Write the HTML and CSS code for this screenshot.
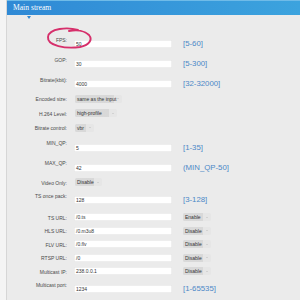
FILE: index.html
```html
<!DOCTYPE html>
<html>
<head>
<meta charset="utf-8">
<link rel="stylesheet" href="styles.css">
</head>
<body>
<div class="page">
  <div class="rail"></div>
  <div class="panel">
    <div class="header"><span class="title">Main stream</span></div>
    <div class="form">
      <div class="row tall"><span class="lbl">FPS:</span><span class="input">50</span><span class="hint">[5-60]</span></div>
      <div class="row tall"><span class="lbl">GOP:</span><span class="input">30</span><span class="hint">[5-300]</span></div>
      <div class="row tall"><span class="lbl">Bitrate(kbit):</span><span class="input">4000</span><span class="hint">[32-32000]</span></div>
      <div class="row sel"><span class="lbl">Encoded size:</span><span class="select w-size">same as the input</span></div>
      <div class="row sel"><span class="lbl">H.264 Level:</span><span class="select w-level">high-profile</span></div>
      <div class="row sel"><span class="lbl">Bitrate control:</span><span class="select w-vbr">vbr</span></div>
      <div class="row tall"><span class="lbl">MIN_QP:</span><span class="input">5</span><span class="hint">[1-35]</span></div>
      <div class="row tall"><span class="lbl">MAX_QP:</span><span class="input">42</span><span class="hint">(MIN_QP-50]</span></div>
      <div class="row sel"><span class="lbl">Video Only:</span><span class="select w-dis">Disable</span></div>
      <div class="row mid"><span class="lbl">TS once pack:</span><span class="input">128</span><span class="hint">[3-128]</span></div>
      <div class="row url first"><span class="lbl">TS URL:</span><span class="input">/0.ts</span><span class="select w-url">Enable</span></div>
      <div class="row url"><span class="lbl">HLS URL:</span><span class="input">/0.m3u8</span><span class="select w-url">Disable</span></div>
      <div class="row url"><span class="lbl">FLV URL:</span><span class="input">/0.flv</span><span class="select w-url">Disable</span></div>
      <div class="row url"><span class="lbl">RTSP URL:</span><span class="input">/0</span><span class="select w-url">Disable</span></div>
      <div class="row url"><span class="lbl">Multicast IP:</span><span class="input">238.0.0.1</span><span class="select w-url">Disable</span></div>
      <div class="row mid"><span class="lbl">Multicast port:</span><span class="input">1234</span><span class="hint">[1-65535]</span></div>
    </div>
  </div>
  <svg class="mark" width="56" height="30" viewBox="0 0 56 30">
    <path d="M34 4 C24 1, 5 2, 4 11 C3 20, 22 23, 36 21 C45 19, 49 14, 45 9 C41 5, 33 3.5, 25 5" fill="none" stroke="#d62f6b" stroke-width="1.9" stroke-linecap="round"/>
  </svg>
</div>
</body>
</html>
```

FILE: styles.css
```css
html, body {
  margin: 0;
  padding: 0;
}
body {
  background: #ebebeb;
  font-family: "Liberation Sans", Arial, sans-serif;
  width: 300px;
  height: 300px;
  overflow: hidden;
}
.page {
  position: relative;
  display: flex;
  height: 300px;
}
.rail {
  width: 6px;
  flex: none;
  background: #f4f4f4;
  border-right: 1px solid #d6d6d6;
}
.panel {
  flex: 1;
}
.header {
  position: relative;
  height: 15px;
  background: linear-gradient(to right, #2f89d5, #3ca3de);
  border-top: 1px solid #6fbbe8;
  box-sizing: border-box;
  padding-left: 6px;
  display: flex;
  align-items: center;
}
.header::after {
  content: "";
  position: absolute;
  left: 20px;
  top: 15px;
  border-left: 2.5px solid transparent;
  border-right: 2.5px solid transparent;
  border-top: 3px solid #3289d2;
}
.title {
  font-family: "Liberation Serif", "Times New Roman", serif;
  font-size: 7.6px;
  color: #ffffff;
  line-height: 8px;
}
.form {
  padding-top: 13px;
  display: flex;
  flex-direction: column;
}
.row {
  display: grid;
  grid-template-columns: 60px 105px auto;
  align-items: end;
  height: 14.5px;
}
.row.tall { height: 20px; }
.row.mid { height: 18px; }
.row.url { height: 13.5px; }
.row.first { margin-top: 3.5px; }
.lbl {
  font-size: 5px;
  line-height: 6px;
  color: #4a4a4a;
  text-align: right;
  padding-bottom: 0.5px;
}
.row.tall .lbl, .row.mid .lbl {
  padding-bottom: 5.5px;
}
.input {
  margin-left: 7px;
  height: 8px;
  width: 98px;
  background: #ffffff;
  box-shadow: inset 0 0 0 0.5px #dedede;
  border-radius: 1px;
  font-size: 5px;
  line-height: 8px;
  color: #333;
  padding-left: 2px;
  box-sizing: border-box;
}
.hint {
  margin-left: 11px;
  font-size: 7.8px;
  line-height: 8px;
  color: #4b88c7;
  white-space: nowrap;
}
.select {
  margin-left: 8px;
  height: 8px;
  box-sizing: border-box;
  border-radius: 1.5px;
  background: linear-gradient(to right, #dadada 0, #d8d8d8 calc(100% - 8px), #e6e6e6 calc(100% - 8px));
  font-size: 5px;
  line-height: 8px;
  color: #333;
  padding-left: 2px;
  white-space: nowrap;
  position: relative;
}
.select::after {
  content: "";
  position: absolute;
  right: 3px;
  top: 3.5px;
  border-left: 1.2px solid transparent;
  border-right: 1.2px solid transparent;
  border-top: 1.4px solid #bdbdbd;
}
.row.url .select { margin-left: 11px; width: 28px; }
.w-size { width: 47px; }
.w-level { width: 42px; }
.w-vbr { width: 19px; }
.w-dis { width: 27px; }
.mark {
  position: absolute;
  left: 44px;
  top: 26px;
}
```
